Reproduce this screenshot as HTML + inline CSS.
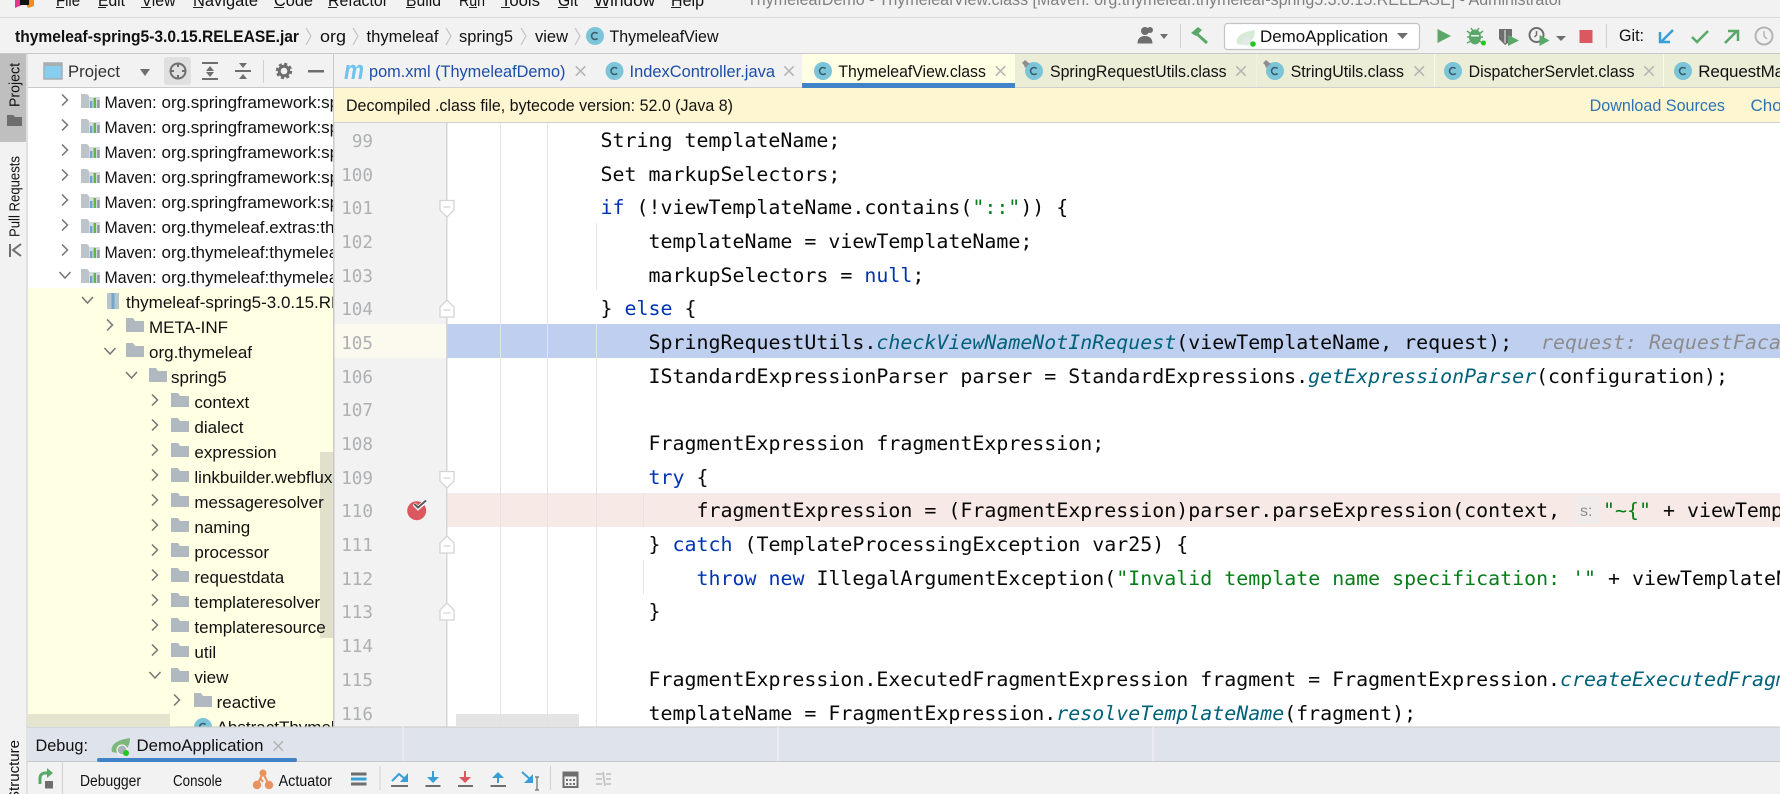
<!DOCTYPE html>
<html lang="en"><head><meta charset="utf-8"><title>ThymeleafView.class</title>
<style>
html,body{margin:0;padding:0;width:1780px;height:794px;overflow:hidden;background:#f2f2f2}
svg{display:block}
.ui{font-family:"Liberation Sans",sans-serif;font-size:17px;fill:#111}
.code{font-family:"DejaVu Sans Mono","Liberation Mono",monospace;font-size:19.93px;fill:#080808;white-space:pre}
.ln{font-family:"DejaVu Sans Mono","Liberation Mono",monospace;font-size:17.6px;fill:#aeb0b2;text-anchor:end}
.k{fill:#0033b3}.s{fill:#067d17}.m{fill:#00627a;font-style:italic}
.h{fill:#8c8c8c;font-style:italic}
.tab{font-family:"Liberation Sans",sans-serif;font-size:17px;fill:#111}
.x{stroke:#b4b4b4;stroke-width:1.5;fill:none}
.ch{stroke:#757575;stroke-width:1.5;fill:none}
.ic{stroke:#6e6e6e;stroke-width:2;fill:none}
.bl{stroke:#389fd6;stroke-width:2;fill:none}
</style></head><body>
<svg xmlns="http://www.w3.org/2000/svg" width="1780" height="794" viewBox="0 0 1780 794" xml:space="preserve">
<defs>
<clipPath id="tree"><rect x="28" y="88" width="305" height="639"/></clipPath>
<clipPath id="ed"><rect x="447" y="122" width="1333" height="605"/></clipPath>
<g id="cls"><circle r="9" fill="#7cc5d9"/><path d="M2.6-2.4A3.5 3.5 0 1 0 2.6 2.4" fill="none" stroke="#3a5f6e" stroke-width="1.6"/></g>
<path id="pin" d="M-3-4l5 4-2 1-3 3-1-3-2-2z" fill="#8e8e8e"/>
<path id="fold" d="M0 0h7l2 3h9v11H0z" fill="#afb9bf"/>
<g id="lib"><path d="M0 0h6l2 2v12H0z" fill="#bcc4c9"/><path d="M8 3h11v11H8z" fill="#d5dade"/><rect x="9" y="7" width="2.4" height="7" fill="#6ea5d0"/><rect x="12.6" y="4" width="2.4" height="10" fill="#62b543"/><rect x="16.2" y="6" width="2.4" height="8" fill="#8a9aa3"/></g>
<path id="cr" class="ch" d="M0-5.5L5.5 0L0 5.5"/>
<path id="cd" class="ch" d="M-5.5-3L0 3L5.5-3"/>
<path id="close" class="x" d="M-4.7-4.7L4.7 4.7M-4.7 4.7L4.7-4.7"/>
<path id="fdown" d="M-7-6.5H7V3L0 10-7 3Z" fill="#fff" stroke="#d4d4d4" stroke-width="1.3"/>
<path id="fup" d="M-7 10H7V0L0-7-7 0Z" fill="#fff" stroke="#d4d4d4" stroke-width="1.3"/>
<g id="spr"><path d="M0 13C-2 6 4 1 18-1C18 8 13 13 6 14Z" fill="#7cb87c"/><circle cx="10" cy="11" r="5" fill="#aab2b6" stroke="#fff"/><circle cx="14" cy="14" r="3" fill="#1fc71f"/></g>
</defs>

<rect width="1780" height="794" fill="#f2f2f2"/>

<!-- menu bar -->
<path d="M15 0h9l-2 5-7 3z" fill="#e8358c"/><path d="M24 0h10v6l-6 2z" fill="#f68a1e"/><rect x="20" y="0" width="9" height="5" fill="#111"/>
<g class="ui">
<text x="56" y="6" textLength="24" lengthAdjust="spacingAndGlyphs">File</text>
<text x="98" y="6" textLength="27" lengthAdjust="spacingAndGlyphs">Edit</text>
<text x="141.5" y="6" textLength="34" lengthAdjust="spacingAndGlyphs">View</text>
<text x="193" y="6" textLength="65" lengthAdjust="spacingAndGlyphs">Navigate</text>
<text x="274" y="6" textLength="39" lengthAdjust="spacingAndGlyphs">Code</text>
<text x="328" y="6" textLength="60" lengthAdjust="spacingAndGlyphs">Refactor</text>
<text x="406" y="6" textLength="35" lengthAdjust="spacingAndGlyphs">Build</text>
<text x="459" y="6" textLength="26" lengthAdjust="spacingAndGlyphs">Run</text>
<text x="501" y="6" textLength="39" lengthAdjust="spacingAndGlyphs">Tools</text>
<text x="558" y="6" textLength="20" lengthAdjust="spacingAndGlyphs">Git</text>
<text x="594" y="6" textLength="61" lengthAdjust="spacingAndGlyphs">Window</text>
<text x="671" y="6" textLength="33" lengthAdjust="spacingAndGlyphs">Help</text>
</g>
<g fill="#222"><rect x="56" y="7" width="8" height="1"/><rect x="98" y="7" width="8" height="1"/><rect x="141" y="7" width="10" height="1"/><rect x="193" y="7" width="10" height="1"/><rect x="274" y="7" width="10" height="1"/><rect x="328" y="7" width="9" height="1"/><rect x="406" y="7" width="9" height="1"/><rect x="469" y="7" width="8" height="1"/><rect x="501" y="7" width="9" height="1"/><rect x="558" y="7" width="10" height="1"/><rect x="594" y="7" width="14" height="1"/><rect x="671" y="7" width="10" height="1"/></g>
<text class="ui" x="747" y="5" textLength="816" lengthAdjust="spacingAndGlyphs" style="fill:#808080">ThymeleafDemo - ThymeleafView.class [Maven: org.thymeleaf:thymeleaf-spring5:3.0.15.RELEASE] - Administrator</text>
<rect x="0" y="17" width="1780" height="1" fill="#dadada"/>

<!-- breadcrumbs -->
<g class="ui">
<text x="15" y="42" font-weight="700" textLength="284" lengthAdjust="spacingAndGlyphs">thymeleaf-spring5-3.0.15.RELEASE.jar</text>
<text x="320" y="42" textLength="26" lengthAdjust="spacingAndGlyphs">org</text>
<text x="366.5" y="42" textLength="72" lengthAdjust="spacingAndGlyphs">thymeleaf</text>
<text x="459" y="42" textLength="54" lengthAdjust="spacingAndGlyphs">spring5</text>
<text x="535" y="42" textLength="33" lengthAdjust="spacingAndGlyphs">view</text>
<text x="609.5" y="42" textLength="109" lengthAdjust="spacingAndGlyphs">ThymeleafView</text>
</g>
<g stroke="#c4c4c4" stroke-width="1.2" fill="none"><path d="M306 28l5 8-5 9"/><path d="M353 28l5 8-5 9"/><path d="M446 28l5 8-5 9"/><path d="M521 28l5 8-5 9"/><path d="M575 28l5 8-5 9"/></g>
<use href="#cls" x="595" y="36"/>

<!-- top toolbar -->
<g fill="#6e6e6e"><circle cx="1145" cy="31" r="4"/><path d="M1137.500 43.500c0-5 3-7.500 7.500-7.500s7.500 2.500 7.500 7.500z"/><circle cx="1150" cy="30" r="3"/><path d="M1160 34h8l-4 5z"/></g>
<rect x="1180" y="24" width="1" height="24" fill="#d0d0d0"/>
<path d="M1191 33l7-6 4 3-6 6z" fill="#59a869"/><path d="M1197 34l10 9" stroke="#59a869" stroke-width="3" fill="none"/>
<rect x="1224.500" y="23.500" width="195" height="26" rx="3" fill="#fff" stroke="#c4c4c4" stroke-width="1.2"/>
<g transform="translate(1237,31)"><path d="M0 13C-2 6 4 1 18-1C18 8 13 13 6 14Z" fill="#d8ebd6"/><circle cx="10" cy="10" r="4.500" fill="#e4e8ea"/><circle cx="16" cy="13" r="2.800" fill="#1fc71f"/></g>
<text class="ui" x="1260" y="42" textLength="128" lengthAdjust="spacingAndGlyphs">DemoApplication</text>
<path d="M1397 33h11l-5.500 6z" fill="#6e6e6e"/>
<path d="M1437.500 29v14l13.500-7z" fill="#59a869"/>
<g transform="translate(-9,0)"><g fill="#59a869"><ellipse cx="1484" cy="37" rx="6" ry="7.500"/><path d="M1476 31l4 3M1476 37h3M1476 43l4-2M1492 31l-4 3M1492 37h-3M1492 43l-4-2M1480 28l2 3M1488 28l-2 3" stroke="#59a869" stroke-width="1.500"/></g><rect x="1480" y="35" width="8" height="1.500" fill="#f2f2f2"/><circle cx="1492.500" cy="43" r="2.500" fill="#1fc71f"/></g>
<g transform="translate(-10,0)"><path d="M1509 29h13v7l-4 7-3 2-6-6z" fill="#6e6e6e"/><path d="M1515 30v13" stroke="#f2f2f2" stroke-width="1"/><path d="M1518 35v11l11-5.500z" fill="#59a869"/></g>
<g transform="translate(-11.500,0)"><circle cx="1548" cy="35" r="7" fill="none" stroke="#6e6e6e" stroke-width="2"/><path d="M1548 31v4l-2 2" stroke="#6e6e6e" stroke-width="1.500" fill="none"/><path d="M1551 35v11l10-5.500z" fill="#59a869"/></g>
<path d="M1556 36h10l-5 5z" fill="#6e6e6e"/>
<rect x="1579.500" y="30" width="13" height="13" fill="#db5860"/>
<rect x="1606" y="24" width="1" height="24" fill="#d0d0d0"/>
<text class="ui" x="1619" y="41" textLength="25" lengthAdjust="spacingAndGlyphs">Git:</text>
<path d="M1673 30l-11 11M1660 32v10h10" stroke="#389fd6" stroke-width="2.500" fill="none"/>
<path d="M1692 37l5 5 11-11" stroke="#59a869" stroke-width="2.500" fill="none"/>
<path d="M1725 43l12-12M1728 31h10v10" stroke="#59a869" stroke-width="2.500" fill="none"/>
<circle cx="1764" cy="36" r="8.500" fill="none" stroke="#b4b4b4" stroke-width="2"/><path d="M1764 31v5l3 3" stroke="#b4b4b4" stroke-width="1.500" fill="none"/>
<rect x="0" y="53" width="1780" height="1" fill="#c9c9c9"/>

<!-- left stripe -->
<rect x="0" y="54" width="26" height="88" fill="#bfbfbf"/>
<rect x="26.500" y="54" width="1" height="740" fill="#cfcfcf"/>
<g class="ui" style="font-size:15px">
<text transform="translate(19.500,107) rotate(-90)" textLength="44" lengthAdjust="spacingAndGlyphs">Project</text>
<text transform="translate(19.500,237) rotate(-90)" textLength="81" lengthAdjust="spacingAndGlyphs">Pull Requests</text>
<text transform="translate(19,801) rotate(-90)" textLength="61" lengthAdjust="spacingAndGlyphs">Structure</text>
</g>
<path d="M7 115h6l2 2h7v9H7z" fill="#6e6e6e"/>
<g fill="none" stroke="#6e6e6e" stroke-width="2"><path d="M10 244v13M21 244l-8 6 8 6"/></g>

<!-- project panel -->
<rect x="28" y="54" width="305" height="673" fill="#fff"/>
<rect x="28" y="54" width="305" height="33" fill="#f2f2f2"/>
<rect x="28" y="87" width="305" height="1" fill="#c9c9c9"/>
<rect x="44" y="63" width="18" height="16" fill="#87cdf0" stroke="#a8adb0" stroke-width="1.500"/><rect x="44" y="63" width="18" height="3" fill="#a8adb0"/>
<text class="ui" x="68" y="77" textLength="52" lengthAdjust="spacingAndGlyphs" style="fill:#333">Project</text>
<path d="M140 69h10l-5 7z" fill="#6e6e6e"/>
<rect x="164" y="57" width="27" height="28" rx="3" fill="#e0e0e0"/>
<circle class="ic" cx="178" cy="71" r="7.500"/><path class="ic" d="M178 63v4M178 75v4M170 71h4M182 71h4" stroke-width="1.500"/>
<path class="ic" d="M202 63h16M202 79h16"/><path d="M210 66l-4 5h8zM210 77l-4-5h8z" fill="#6e6e6e"/>
<path class="ic" d="M235 71h16"/><path d="M243 68l-4-5h8zM243 74l-4 5h8z" fill="#6e6e6e"/>
<rect x="263" y="60" width="1" height="23" fill="#d0d0d0"/>
<circle cx="284" cy="71" r="4.800" fill="none" stroke="#6e6e6e" stroke-width="3"/><circle cx="284" cy="71" r="7" fill="none" stroke="#6e6e6e" stroke-width="2.400" stroke-dasharray="3 2.500"/>
<rect x="308" y="70" width="16" height="2.500" fill="#6e6e6e"/>

<!-- tree -->
<rect x="28" y="288" width="305" height="439" fill="#ffffe4"/>
<rect x="320" y="452" width="13" height="186" fill="#e0e0cb"/>
<rect x="27" y="714" width="143" height="12" fill="#e4e4cf"/>
<g clip-path="url(#tree)">
<g class="ui">
<text x="104.500" y="108" textLength="52" lengthAdjust="spacingAndGlyphs">Maven:</text><text x="161.500" y="108">org.springframework:spring-aop</text>
<text x="104.500" y="133" textLength="52" lengthAdjust="spacingAndGlyphs">Maven:</text><text x="161.500" y="133">org.springframework:spring-beans</text>
<text x="104.500" y="158" textLength="52" lengthAdjust="spacingAndGlyphs">Maven:</text><text x="161.500" y="158">org.springframework:spring-context</text>
<text x="104.500" y="183" textLength="52" lengthAdjust="spacingAndGlyphs">Maven:</text><text x="161.500" y="183">org.springframework:spring-core</text>
<text x="104.500" y="208" textLength="52" lengthAdjust="spacingAndGlyphs">Maven:</text><text x="161.500" y="208">org.springframework:spring-web</text>
<text x="104.500" y="233" textLength="52" lengthAdjust="spacingAndGlyphs">Maven:</text><text x="161.500" y="233">org.thymeleaf.extras:thymeleaf</text>
<text x="104.500" y="258" textLength="52" lengthAdjust="spacingAndGlyphs">Maven:</text><text x="161.500" y="258">org.thymeleaf:thymeleaf:3.0.15</text>
<text x="104.500" y="283" textLength="52" lengthAdjust="spacingAndGlyphs">Maven:</text><text x="161.500" y="283">org.thymeleaf:thymeleaf-spring5</text>
<text x="126" y="308">thymeleaf-spring5-3.0.15.RELEASE.jar</text>
<text x="149" y="333">META-INF</text>
<text x="149" y="358">org.thymeleaf</text>
<text x="171" y="383">spring5</text>
<text x="194.400" y="408">context</text>
<text x="194.400" y="433">dialect</text>
<text x="194.400" y="458">expression</text>
<text x="194.400" y="483">linkbuilder.webflux</text>
<text x="194.400" y="508">messageresolver</text>
<text x="194.400" y="533">naming</text>
<text x="194.400" y="558">processor</text>
<text x="194.400" y="583">requestdata</text>
<text x="194.400" y="608">templateresolver</text>
<text x="194.400" y="633">templateresource</text>
<text x="194.400" y="658">util</text>
<text x="194.400" y="683">view</text>
<text x="216.600" y="708">reactive</text>
<text x="216.600" y="733">AbstractThymeleafView</text>
</g>
<use href="#cr" x="62" y="100"/><use href="#cr" x="62" y="125"/><use href="#cr" x="62" y="150"/><use href="#cr" x="62" y="175"/><use href="#cr" x="62" y="200"/><use href="#cr" x="62" y="225"/><use href="#cr" x="62" y="250"/><use href="#cd" x="65" y="275"/>
<use href="#lib" x="81" y="94"/><use href="#lib" x="81" y="119"/><use href="#lib" x="81" y="144"/><use href="#lib" x="81" y="169"/><use href="#lib" x="81" y="194"/><use href="#lib" x="81" y="219"/><use href="#lib" x="81" y="244"/><use href="#lib" x="81" y="269"/>
<use href="#cd" x="87.500" y="300"/>
<rect x="107" y="293" width="12" height="16" fill="#b5c5cc"/><rect x="111.500" y="293" width="3" height="16" fill="#6fa8c8"/>
<use href="#cr" x="107" y="325"/><use href="#fold" x="126" y="318"/>
<use href="#cd" x="110" y="351"/><use href="#fold" x="126" y="343"/>
<use href="#cd" x="131.500" y="375"/><use href="#fold" x="149" y="368"/>
<use href="#cr" x="152" y="400"/><use href="#fold" x="171" y="393"/>
<use href="#cr" x="152" y="425"/><use href="#fold" x="171" y="418"/>
<use href="#cr" x="152" y="450"/><use href="#fold" x="171" y="443"/>
<use href="#cr" x="152" y="475"/><use href="#fold" x="171" y="468"/>
<use href="#cr" x="152" y="500"/><use href="#fold" x="171" y="493"/>
<use href="#cr" x="152" y="525"/><use href="#fold" x="171" y="518"/>
<use href="#cr" x="152" y="550"/><use href="#fold" x="171" y="543"/>
<use href="#cr" x="152" y="575"/><use href="#fold" x="171" y="568"/>
<use href="#cr" x="152" y="600"/><use href="#fold" x="171" y="593"/>
<use href="#cr" x="152" y="625"/><use href="#fold" x="171" y="618"/>
<use href="#cr" x="152" y="650"/><use href="#fold" x="171" y="643"/>
<use href="#cd" x="155" y="675"/><use href="#fold" x="171" y="668"/>
<use href="#cr" x="174" y="700"/><use href="#fold" x="194" y="693"/>
<use href="#cls" x="203" y="727"/>
</g>
<rect x="333" y="54" width="1.500" height="673" fill="#c9c9c9"/>

<!-- tabs -->
<rect x="334" y="54" width="468" height="33" fill="#f2f2f2"/>
<rect x="802" y="54" width="213" height="33" fill="#ffffe4"/>
<rect x="1015" y="54" width="765" height="33" fill="#ecedd6"/>
<rect x="1434" y="54" width="1" height="33" fill="#fafaf0"/><rect x="1663" y="54" width="1" height="33" fill="#fafaf0"/><rect x="1256" y="54" width="1" height="33" fill="#f2f2e4"/>
<rect x="334" y="87" width="1446" height="1" fill="#d0d0d0"/>
<rect x="802" y="83" width="213" height="5" fill="#4083c9"/>
<text x="344" y="79" font-family="Liberation Sans,sans-serif" font-size="27" font-weight="700" font-style="italic" fill="#6fc4ef" textLength="20" lengthAdjust="spacingAndGlyphs">m</text>
<g class="tab">
<text x="369" y="77" textLength="196.500" lengthAdjust="spacingAndGlyphs" style="fill:#1c4ea6">pom.xml (ThymeleafDemo)</text>
<text x="629.500" y="77" textLength="145.500" lengthAdjust="spacingAndGlyphs" style="fill:#1c4ea6">IndexController.java</text>
<text x="838.400" y="77" textLength="147.500" lengthAdjust="spacingAndGlyphs">ThymeleafView.class</text>
<text x="1050" y="77" textLength="176.600" lengthAdjust="spacingAndGlyphs">SpringRequestUtils.class</text>
<text x="1290.600" y="77" textLength="113.400" lengthAdjust="spacingAndGlyphs">StringUtils.class</text>
<text x="1468.600" y="77" textLength="166" lengthAdjust="spacingAndGlyphs">DispatcherServlet.class</text>
<text x="1698.300" y="77" style="letter-spacing:-.15px">RequestMappingHandlerAdapter.class</text>
</g>
<use href="#close" x="580.500" y="71"/><use href="#close" x="789" y="71"/><use href="#close" x="1000.500" y="71"/><use href="#close" x="1241" y="71"/><use href="#close" x="1419.300" y="71"/><use href="#close" x="1649" y="71"/>
<use href="#cls" x="614.500" y="71"/><use href="#cls" x="823" y="71"/><use href="#cls" x="1034" y="71"/><use href="#pin" x="1028" y="64"/><use href="#cls" x="1275" y="71"/><use href="#pin" x="1269" y="64"/><use href="#cls" x="1453" y="71"/><use href="#cls" x="1683" y="71"/>

<!-- decompiled bar -->
<rect x="334" y="88" width="1446" height="34" fill="#fef6d0"/>
<rect x="334" y="122" width="1446" height="1" fill="#d0d0d0"/>
<text class="ui" x="346" y="111" textLength="387" lengthAdjust="spacingAndGlyphs">Decompiled .class file, bytecode version: 52.0 (Java 8)</text>
<text class="ui" x="1589.600" y="111" textLength="135.400" lengthAdjust="spacingAndGlyphs" style="fill:#2c72b5">Download Sources</text>
<text class="ui" x="1750.500" y="111" style="fill:#2c72b5">Choose Sources...</text>

<!-- gutter & editor -->
<rect x="334.500" y="123" width="112" height="604" fill="#f2f2f2"/>
<rect x="447" y="123" width="1333" height="604" fill="#fff"/>
<rect x="334.500" y="324" width="112" height="34" fill="#fcfaef"/>
<rect x="447" y="324" width="1333" height="34" fill="#bfcfef"/>
<rect x="447" y="493" width="1333" height="34" fill="#f7e9e5"/>
<g fill="#e4e4e4">
<rect x="500" y="123" width="1" height="604"/><rect x="547" y="123" width="1" height="604"/>
<rect x="596" y="223" width="1" height="67"/><rect x="596" y="324" width="1" height="403"/>
<rect x="643" y="493" width="1" height="34"/><rect x="643" y="560" width="1" height="34"/>
</g>
<rect x="446" y="123" width="1.500" height="604" fill="#d6d6d6"/>
<use href="#fdown" x="447" y="207"/><use href="#fup" x="447" y="307"/><use href="#fdown" x="447" y="478"/><use href="#fup" x="447" y="543"/><use href="#fup" x="447" y="610"/>
<g stroke="#c8c8c8" stroke-width="1"><path d="M443.500 207h7M443.500 310h7M443.500 478h7M443.500 546h7M443.500 613h7"/></g>
<circle cx="416.700" cy="510.700" r="9.500" fill="#db5860"/>
<path d="M414 504l4 4 8-7" stroke="#fff" stroke-width="4" fill="none"/><path d="M414.500 504l3.500 3.500 8-7" stroke="#5a5a5a" stroke-width="2" fill="none"/>

<g class="ln">
<text x="373" y="147">99</text><text x="373" y="181">100</text><text x="373" y="214">101</text><text x="373" y="248">102</text><text x="373" y="282">103</text><text x="373" y="315">104</text><text x="373" y="349">105</text><text x="373" y="383">106</text><text x="373" y="416">107</text><text x="373" y="450">108</text><text x="373" y="484">109</text><text x="373" y="517">110</text><text x="373" y="551">111</text><text x="373" y="585">112</text><text x="373" y="618">113</text><text x="373" y="652">114</text><text x="373" y="686">115</text><text x="373" y="720">116</text>
</g>

<g clip-path="url(#ed)"><g class="code">
<text x="600.500" y="147">String templateName;</text>
<text x="600.500" y="181">Set markupSelectors;</text>
<text x="600.500" y="214"><tspan class="k">if</tspan> (!viewTemplateName.contains(<tspan class="s">"::"</tspan>)) {</text>
<text x="648.500" y="248">templateName = viewTemplateName;</text>
<text x="648.500" y="282">markupSelectors = <tspan class="k">null</tspan>;</text>
<text x="600.500" y="315">} <tspan class="k">else</tspan> {</text>
<text x="648.500" y="349">SpringRequestUtils.<tspan class="m">checkViewNameNotInRequest</tspan>(viewTemplateName, request);</text>
<text x="1541" y="349" class="h">request: RequestFacade</text>
<text x="648.500" y="383">IStandardExpressionParser parser = StandardExpressions.<tspan class="m">getExpressionParser</tspan>(configuration);</text>
<text x="648.500" y="450">FragmentExpression fragmentExpression;</text>
<text x="648.500" y="484"><tspan class="k">try</tspan> {</text>
<text x="696.500" y="517">fragmentExpression = (FragmentExpression)parser.parseExpression(context,</text>
<text x="648.500" y="551">} <tspan class="k">catch</tspan> (TemplateProcessingException var25) {</text>
<text x="696.500" y="585"><tspan class="k">throw new</tspan> IllegalArgumentException(<tspan class="s">"Invalid template name specification: '"</tspan> + viewTemplateName</text>
<text x="648.500" y="618">}</text>
<text x="648.500" y="686">FragmentExpression.ExecutedFragmentExpression fragment = FragmentExpression.<tspan class="m">createExecutedFragmentExpression</tspan>(</text>
<text x="648.500" y="720">templateName = FragmentExpression.<tspan class="m">resolveTemplateName</tspan>(fragment);</text>
</g>
<rect x="1573.700" y="496" width="26" height="28" rx="3" fill="#f0eceb"/>
<text x="1580" y="516" font-family="Liberation Sans,sans-serif" font-size="16" fill="#8c8c8c">s:</text>
<text class="code" x="1603" y="517"><tspan class="s">"~{"</tspan> + viewTemplateName</text>
</g>
<rect x="456" y="714" width="123" height="12" fill="#e2e2e2" fill-opacity=".92"/>

<!-- debug panel -->
<rect x="27" y="727" width="1753" height="35" fill="#dfe3ec"/>
<rect x="27" y="726.500" width="1753" height="1" fill="#c9c9c9"/>
<rect x="27" y="761" width="1753" height="1" fill="#c9c9c9"/>
<rect x="402.500" y="727" width="1" height="34" fill="#f4f5f8"/><rect x="777.500" y="727" width="1" height="34" fill="#f4f5f8"/><rect x="1152.500" y="727" width="1" height="34" fill="#f4f5f8"/>
<text class="ui" x="35.500" y="751" textLength="52.500" lengthAdjust="spacingAndGlyphs">Debug:</text>
<use href="#spr" x="112" y="739"/>
<text class="ui" x="136.500" y="751" textLength="127" lengthAdjust="spacingAndGlyphs">DemoApplication</text>
<use href="#close" x="278.300" y="746"/>
<rect x="97" y="758" width="200" height="4" rx="2" fill="#4083c9"/>

<rect x="27.500" y="762" width="1752.500" height="32" fill="#f2f2f2"/>
<path d="M40 784v-6a5 5 0 0 1 5-5h5" stroke="#59a869" stroke-width="3" fill="none"/><path d="M47 768l6 5-6 5z" fill="#59a869"/><rect x="45" y="781" width="8" height="7.500" fill="#6e6e6e"/>
<rect x="62" y="762" width="1" height="32" fill="#d0d0d0"/>
<g class="ui" style="font-size:15.500px">
<text x="80" y="786" textLength="61" lengthAdjust="spacingAndGlyphs">Debugger</text>
<text x="173" y="786" textLength="49" lengthAdjust="spacingAndGlyphs">Console</text>
<text x="278.600" y="786" textLength="53.400" lengthAdjust="spacingAndGlyphs">Actuator</text>
</g>
<g stroke="#e8925f" stroke-width="2" fill="#e8925f"><path d="M263 773l-6 12M263 773l6 12M263 782l-3-4" fill="none"/><circle cx="263" cy="773" r="2.500"/><circle cx="257" cy="785" r="3.200"/><circle cx="269" cy="785" r="3.200"/></g>
<rect x="351" y="772.500" width="15.500" height="3" fill="#6e6e6e"/><rect x="351" y="777.500" width="15.500" height="3" fill="#389fd6"/><rect x="351" y="782.500" width="15.500" height="3" fill="#6e6e6e"/>
<rect x="379.500" y="766" width="1" height="24" fill="#d0d0d0"/>
<path class="bl" d="M392 781l7-7 6 5"/><path d="M408 773v9h-8z" fill="#389fd6"/><rect x="391" y="785" width="17" height="2" fill="#6e6e6e"/>
<path class="bl" d="M433 771v9"/><path d="M427 777h12l-6 6z" fill="#389fd6"/><rect x="425.500" y="785" width="15" height="2" fill="#6e6e6e"/>
<path d="M465 771v9" stroke="#db5860" stroke-width="2"/><path d="M459 777h12l-6 6z" fill="#db5860"/><rect x="458" y="785" width="15" height="2" fill="#6e6e6e"/>
<path class="bl" d="M498 774v9"/><path d="M492 778h12l-6-6z" fill="#389fd6"/><rect x="490.500" y="785" width="15.500" height="2" fill="#6e6e6e"/>
<path class="bl" d="M522 772l9 8"/><path d="M533 774v9h-9z" fill="#389fd6"/><path d="M535 777h4M535 790h4M537 777v13" stroke="#6e6e6e" stroke-width="1.200" fill="none"/>
<rect x="550" y="766" width="1" height="24" fill="#d0d0d0"/>
<rect x="563.500" y="772.500" width="14" height="14.500" fill="none" stroke="#6e6e6e" stroke-width="2"/><rect x="563.500" y="772.500" width="14" height="4" fill="#6e6e6e"/><path d="M566 780h9M566 784h9" stroke="#6e6e6e" stroke-width="2" stroke-dasharray="2 1.500"/>
<path d="M596 774h6M596 779h6M596 784h6M606 774h5M606 779h5M606 784h5M603 772l2 14" stroke="#c4c4c4" stroke-width="1.800" fill="none"/>
</svg>
</body></html>
